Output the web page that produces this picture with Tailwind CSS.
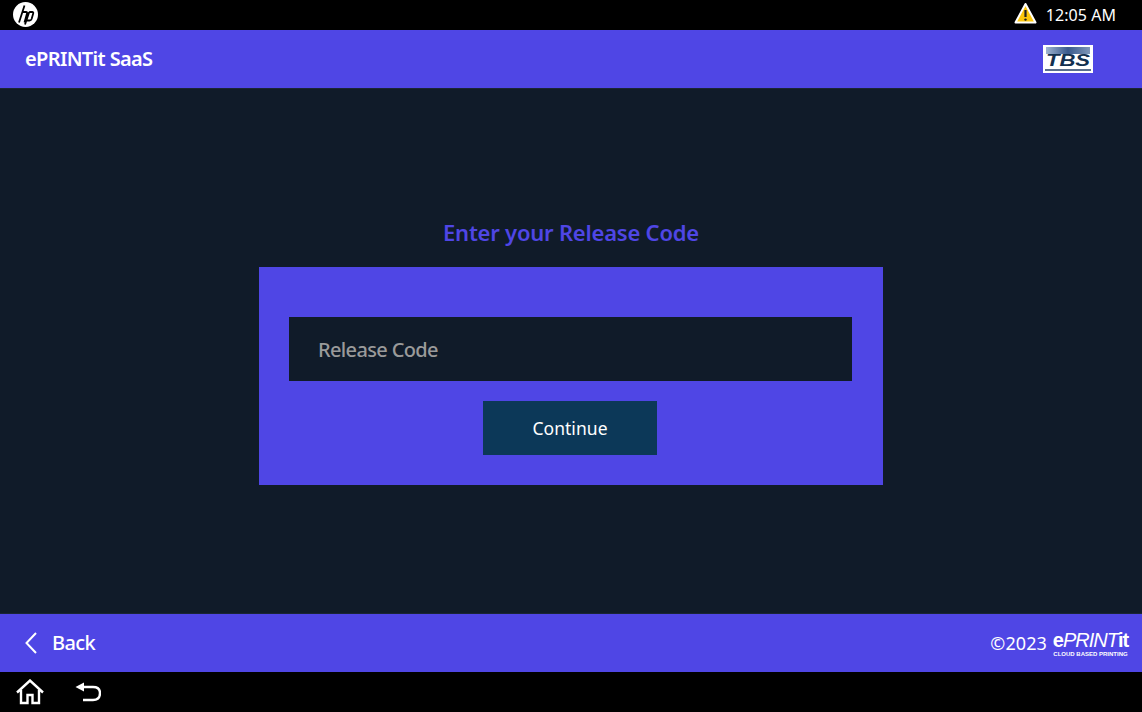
<!DOCTYPE html>
<html lang="en">
  <head>
    <meta charset="UTF-8" />
    <meta name="viewport" content="width=device-width, initial-scale=1.0" />
    <script src="https://cdn.jsdelivr.net/npm/@tailwindcss/browser@4"></script>
    <title>ePRINTit SaaS</title>
  </head>
  <body class="h-[712px] w-[1142px] overflow-hidden flex flex-col bg-black font-['Noto_Sans',sans-serif] text-white">
    <!-- status bar -->
    <div class="h-[30px] flex items-center justify-between bg-black pl-[13px] pr-[26px]">
      <svg class="w-[25px] h-[25px] -mt-[1px]" viewBox="0 0 25 25">
        <circle cx="12.5" cy="12.5" r="12.5" fill="#fff" />
        <path d="M11.5 3.5 L6 20.5 M8.7 10 H13 q1.4 0 1 1.4 L11.5 20.5 M16.2 10 h3 q1.5 0 1 1.5 L18.6 17 q-.5 1.5 -2 1.5 h-2.6 M16.2 10 L12 22.5" fill="none" stroke="#000" stroke-width="1.8" />
      </svg>
      <div class="flex items-center gap-[9px]">
        <svg class="w-[23px] h-[23px] -mt-[3px]" viewBox="0 0 23 23">
          <path d="M11.5 2 L21.5 20.5 H1.5 Z" fill="#fdc70c" stroke="#fff" stroke-width="2" stroke-linejoin="round" />
          <path d="M11.5 8 V15" stroke="#222" stroke-width="2.2" />
          <circle cx="11.5" cy="17.6" r="1.2" fill="#222" />
        </svg>
        <span class="text-[16px] leading-none tracking-[0.05px]">12:05 AM</span>
      </div>
    </div>

    <!-- header -->
    <header class="h-[58px] flex items-center justify-between bg-[#4f46e5] pl-[25px] pr-[49px]">
      <span class="text-[20px] font-semibold tracking-[-0.65px]">ePRINTit SaaS</span>
      <div class="w-[50px] h-[28px] bg-white flex flex-col items-center overflow-hidden">
        <div class="w-[44px] h-[7px] mt-[2px] bg-gradient-to-r from-[#9fb4d0] via-[#3a5a8c] to-[#7f97b8]"></div>
        <span class="text-[17px] leading-[14px] font-black italic text-[#12304f] scale-x-[1.3] font-['Liberation_Sans',sans-serif]">TBS</span>
        <div class="w-[46px] h-[2px] mt-[1px] bg-[#5a6f8c]"></div>
      </div>
    </header>

    <!-- main -->
    <main class="h-[526px] flex flex-col items-center justify-center bg-[#101b29] border-y border-[#1a2536]">
      <h1 class="h-[32px] mb-[18px] text-[22px] leading-[30px] font-semibold text-[#4f46e5] tracking-[-0.22px]">Enter your Release Code</h1>
      <div class="w-[624px] h-[218px] bg-[#4f46e5] pt-[50px] px-[30px] flex flex-col items-center">
        <div class="w-[563px] mr-[1px] h-[64px] bg-[#101b29] flex items-center pl-[29px] pt-[1px] text-[20px] font-medium text-[#9a9a9a] tracking-[-0.65px]">Release Code</div>
        <button class="w-[174px] mr-[2px] h-[54px] mt-[20px] bg-[#0c3858] text-[17.5px] tracking-[0.05px] text-white">Continue</button>
      </div>
    </main>

    <!-- footer -->
    <footer class="h-[58px] flex items-center justify-between bg-[#4f46e5] pl-[25px] pr-[14px]">
      <div class="flex items-center gap-[15px]">
        <svg class="w-[12px] h-[22px]" viewBox="0 0 12 22">
          <path d="M11 1 L1.5 11 L11 21" fill="none" stroke="#fff" stroke-width="2" />
        </svg>
        <span class="text-[20px] leading-[30px] font-medium tracking-[-0.6px]">Back</span>
      </div>
      <div class="flex items-center gap-[6px]">
        <span class="text-[18px] tracking-[0.1px]">©2023</span>
        <div class="flex flex-col items-center w-[75px] font-['Liberation_Sans',sans-serif]">
          <span class="h-[22px] text-[20px] leading-[22px] tracking-[-1px] whitespace-nowrap"><span class="font-bold">e</span><span class="italic">PRINT</span><span class="font-bold">it</span></span>
          <span class="h-[6px] text-[6px] leading-[6px] font-bold whitespace-nowrap">CLOUD BASED PRINTING</span>
        </div>
      </div>
    </footer>

    <!-- system bar -->
    <div class="h-[40px] flex items-center bg-black pl-[16px] gap-[31px]">
      <svg class="w-[28px] h-[26px]" viewBox="0 0 28 26">
        <path d="M1 13.5 L14 1.5 L27 13.5 M5 11 V24 H11.5 V16 H16.5 V24 H23 V11" fill="none" stroke="#fff" stroke-width="2.4" />
      </svg>
      <svg class="w-[26px] h-[20px]" viewBox="0 0 26 20">
        <path d="M0.5 5 L9 0.5 V9.5 Z" fill="#fff" />
        <path d="M8 5 H18 Q25 5 25 11 Q25 18 18 18 H8" fill="none" stroke="#fff" stroke-width="2.4" />
      </svg>
    </div>
  </body>
</html>
